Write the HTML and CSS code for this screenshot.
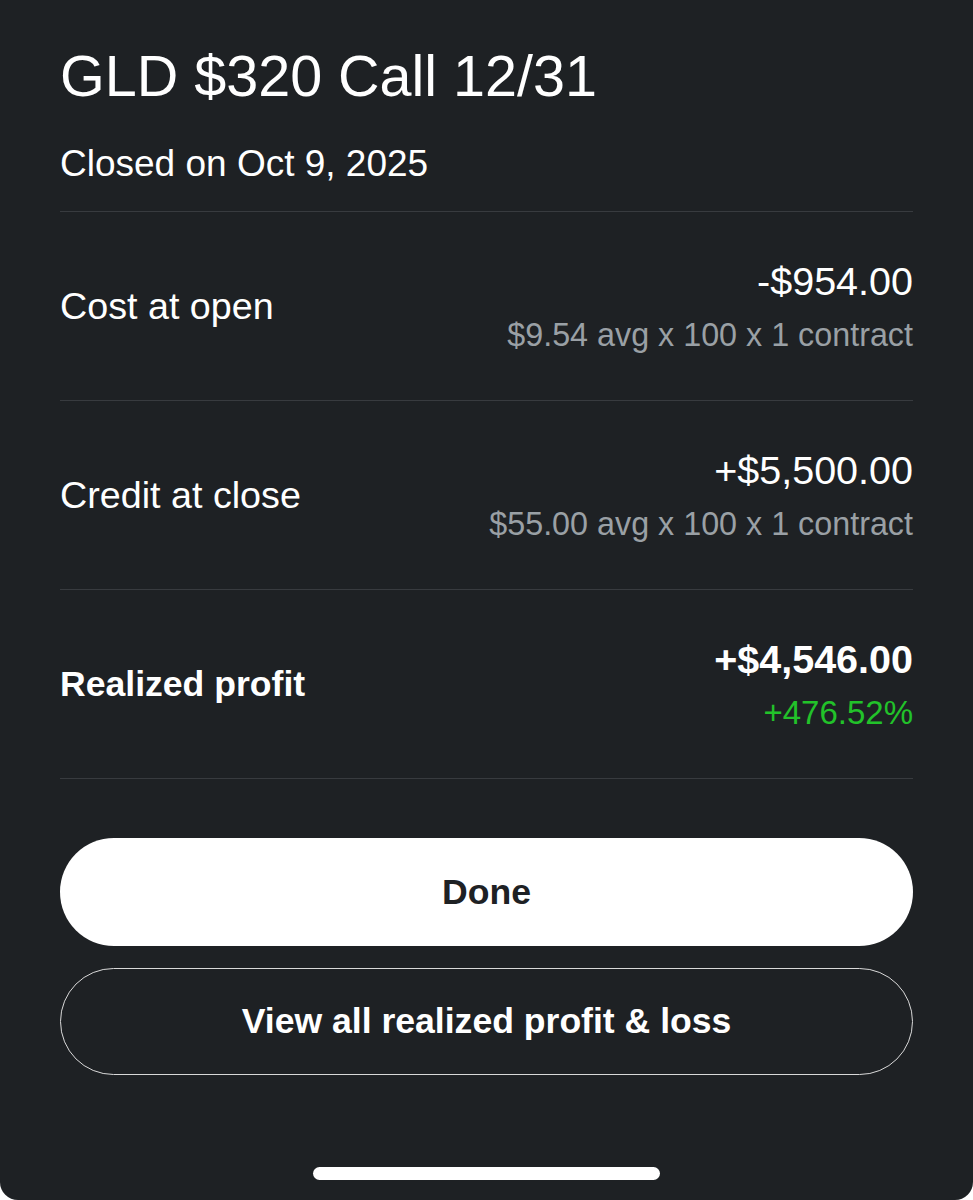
FILE: index.html
```html
<!DOCTYPE html>
<html>
    <head>
        <title>GLD $320 Call 12/31</title>
        <meta charset="UTF-8">
        <meta name="viewport" content="width=device-width, initial-scale=1.0">
        <link rel="stylesheet" href="styles.css">
    </head>
    <body>
        <div class="sheet">
            <div class="header">
                <h1 class="title">GLD $320 Call 12/31</h1>
                <p class="subtitle">Closed on Oct 9, 2025</p>
            </div>

            <div class="row">
                <div class="label">Cost at open</div>
                <div class="amounts">
                    <div class="value">-$954.00</div>
                    <div class="detail">$9.54 avg x 100 x 1 contract</div>
                </div>
            </div>

            <div class="row">
                <div class="label">Credit at close</div>
                <div class="amounts">
                    <div class="value">+$5,500.00</div>
                    <div class="detail">$55.00 avg x 100 x 1 contract</div>
                </div>
            </div>

            <div class="row">
                <div class="label strong">Realized profit</div>
                <div class="amounts">
                    <div class="value strong">+$4,546.00</div>
                    <div class="detail gain">+476.52%</div>
                </div>
            </div>

            <div class="actions">
                <button class="btn btn-solid">Done</button>
                <button class="btn btn-outline">View all realized profit &amp; loss</button>
            </div>

            <div class="home-bar"></div>
        </div>
    </body>
</html>
```

FILE: styles.css
```css
html, body
{
    margin: 0;
    height: 100%;
    background-color: #ffffff;
}
body
{
    font-family: "Liberation Sans", Arial, sans-serif;
    color: #ffffff;
}
.sheet
{
    box-sizing: border-box;
    min-height: 100%;
    display: flex;
    flex-direction: column;
    padding: 0 60px 20px 60px;
    background-color: #1e2124;
    border-radius: 0 0 18px 18px;
}
.header
{
    padding-top: 41px;
    padding-bottom: 25px;
    border-bottom: 1px solid #383b3f;
}
.title
{
    margin: 0;
    font-size: 57.5px;
    line-height: 70px;
    font-weight: normal;
}
.subtitle
{
    margin: 31px 0 0 0;
    font-size: 37px;
    line-height: 44px;
}
.row
{
    height: 188px;
    display: flex;
    justify-content: space-between;
    align-items: center;
    border-bottom: 1px solid #383b3f;
}
.label
{
    font-size: 37.7px;
    line-height: 44px;
}
.amounts
{
    text-align: right;
}
.value
{
    font-size: 39.5px;
    line-height: 46px;
}
.detail
{
    margin-top: 11px;
    font-size: 32.3px;
    line-height: 40px;
    color: #9aa0a5;
}
.strong
{
    font-weight: bold;
}
.label.strong
{
    font-size: 35.6px;
}
.gain
{
    color: #22c22a;
    font-size: 33px;
}
.actions
{
    margin-top: 59px;
    display: flex;
    flex-direction: column;
    gap: 22px;
}
.btn
{
    box-sizing: border-box;
    width: 100%;
    border-radius: 60px;
    font-family: "Liberation Sans", Arial, sans-serif;
    font-size: 35.6px;
    font-weight: bold;
}
.btn-solid
{
    height: 108px;
    background-color: #ffffff;
    color: #1e2124;
    border: none;
}
.btn-outline
{
    height: 107px;
    background-color: transparent;
    color: #ffffff;
    border: 1.5px solid #d9d9d9;
}
.home-bar
{
    width: 347px;
    height: 13px;
    margin: 92px auto 0 auto;
    border-radius: 7px;
    background-color: #ffffff;
}
```
